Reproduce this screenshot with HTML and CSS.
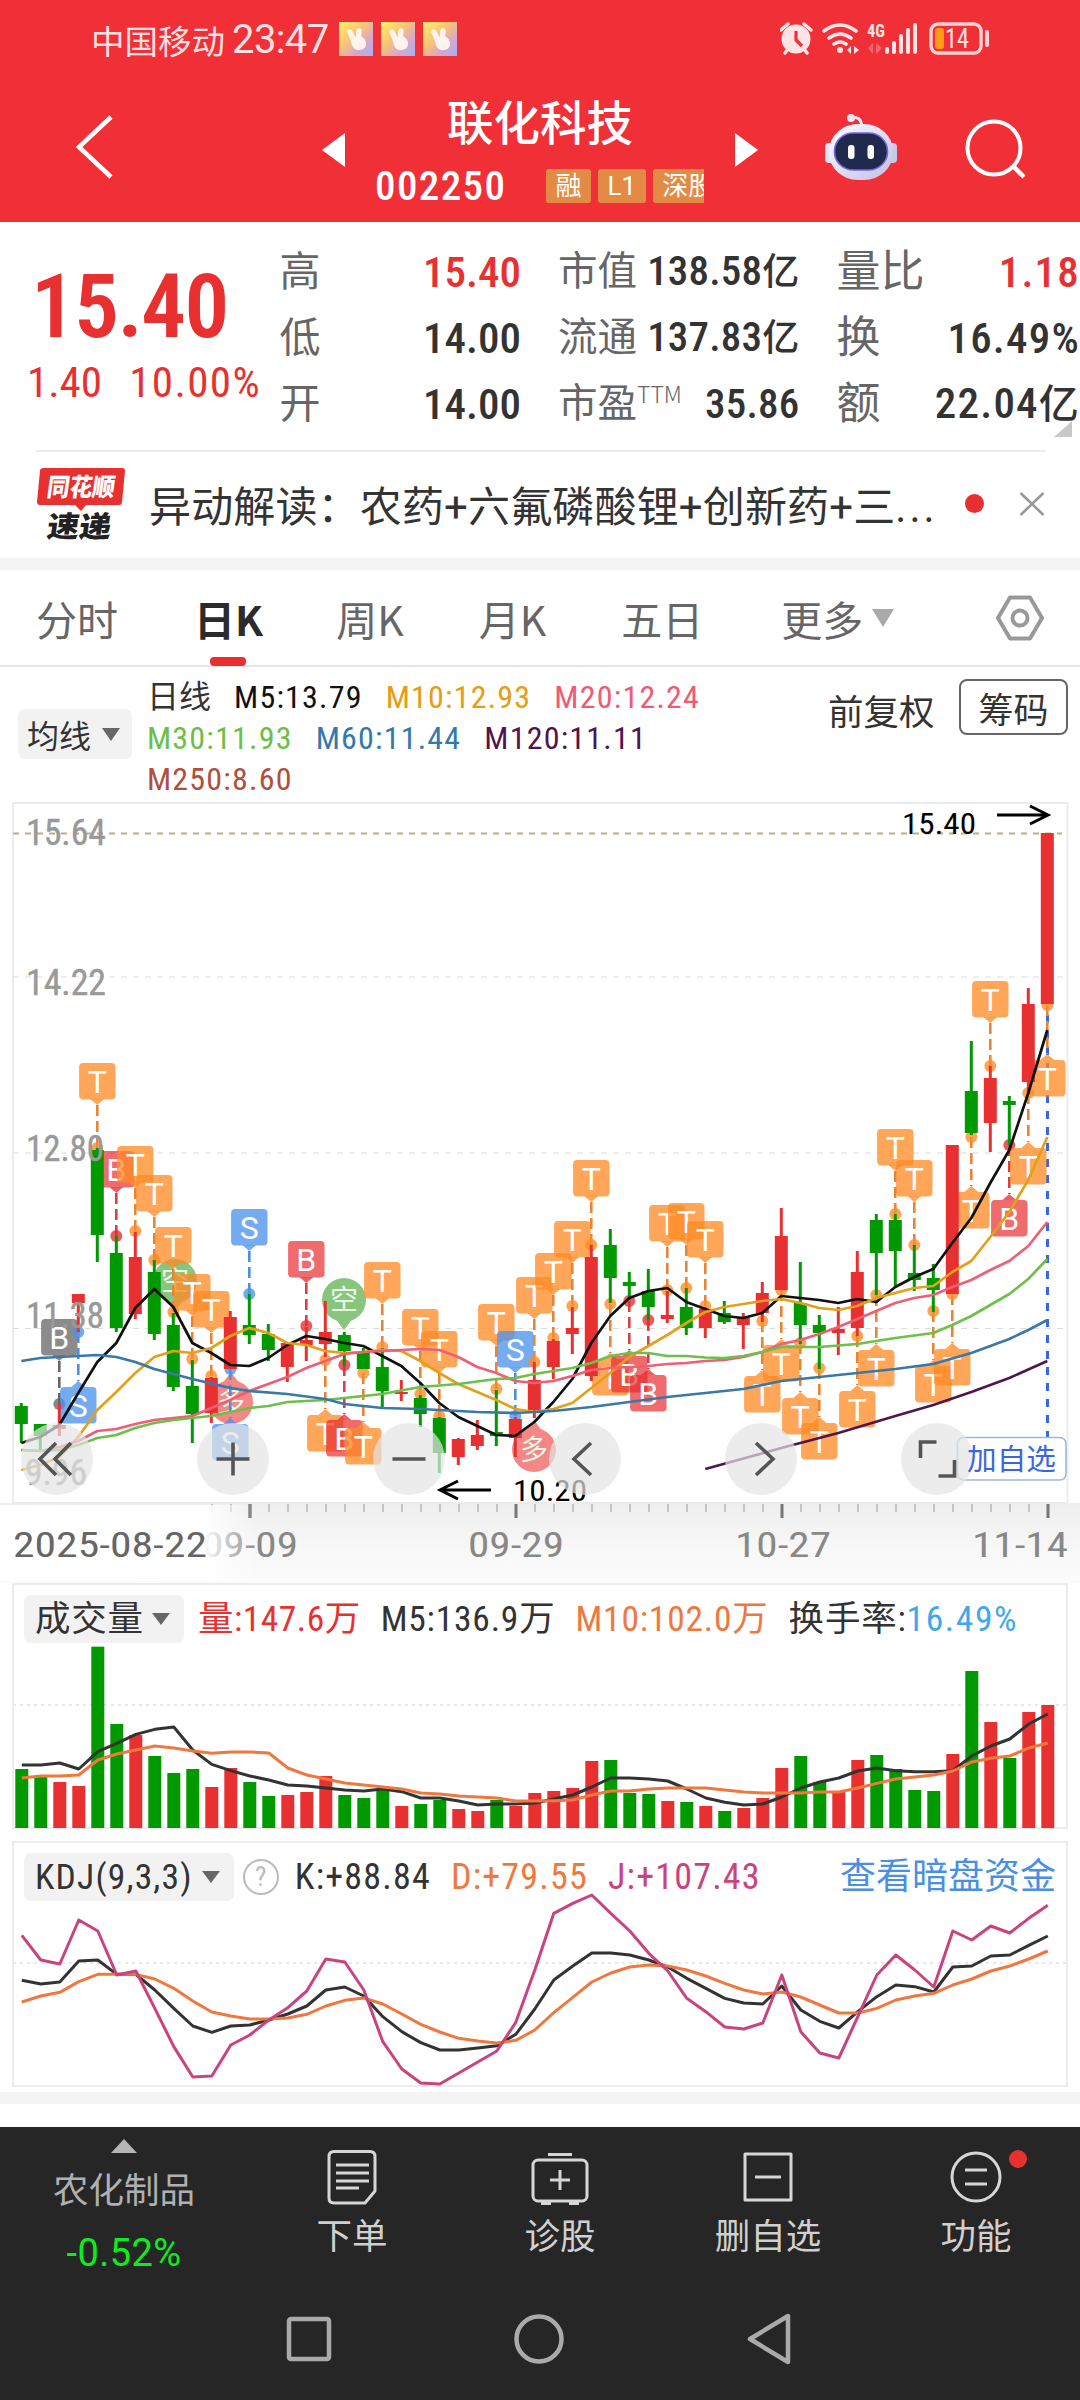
FILE: index.html
```html
<!DOCTYPE html>
<html lang="zh-CN">
<head>
<meta charset="utf-8">
<title>联化科技 002250</title>
<link rel="stylesheet" href="styles.css">
</head>
<body>
<header class="top">
  <div class="status">
    <span class="carrier">中国移动</span><span class="clock">23:47</span>
    <div class="apps">
      <svg class="app" viewBox="0 0 34 34"><defs><linearGradient id="ag" x1="0" y1="0" x2="1" y2="1"><stop offset="0" stop-color="#fff06a"/><stop offset=".4" stop-color="#f9c573"/><stop offset=".7" stop-color="#d8a8c8"/><stop offset="1" stop-color="#9cb4ff"/></linearGradient><symbol id="hand" viewBox="0 0 34 34"><rect width="34" height="34" fill="url(#ag)"/><path d="M11 10l4 9M20 9l-1 9" stroke="#fff3f0" stroke-width="5.5" stroke-linecap="round"/><path d="M11 16l11-2q5 3 5 8t-6 6q-6 1-8-5z" fill="#fff3f0"/></symbol></defs><use href="#hand"/></svg>
      <svg class="app" viewBox="0 0 34 34"><use href="#hand"/></svg>
      <svg class="app" viewBox="0 0 34 34"><use href="#hand"/></svg>
    </div>
    <svg class="sys" width="212" height="36" viewBox="780 22 212 36">
      <g fill="#ffe4e5">
        <circle cx="796" cy="40" r="14.5"/>
        <path d="M781 31l7-6M811 31l-7-6M785 54l3-4M807 54l-3-4" stroke="#ffe4e5" stroke-width="3.5" stroke-linecap="round"/>
        <path d="M796 32v9l6 6" fill="none" stroke="#f12f37" stroke-width="3.2"/>
        <g fill="none" stroke="#ffe4e5" stroke-width="3.6" stroke-linecap="round"><path d="M824 32q16-12 32 0M829 39q11-8 22 0M834 45q6-4 12 0"/></g>
        <circle cx="840" cy="51" r="3"/>
        <path d="M851 47v8l-4-4zM854 47v8l5-4z"/>
        <path d="M873 44v11l-5-6zM876 44v11l6-6z" opacity=".3"/>
        <rect x="885" y="48" width="4" height="7" rx="2"/><rect x="892" y="42" width="4" height="13" rx="2"/><rect x="899" y="35" width="4" height="20" rx="2"/><rect x="906" y="29" width="4" height="26" rx="2"/><rect x="913" y="24" width="4" height="31" rx="2"/>
        <text class="s4g" x="867" y="38" textLength="18" lengthAdjust="spacingAndGlyphs">4G</text>
        <rect x="931" y="25" width="50" height="29" rx="7" fill="none" stroke="#ffd3d5" stroke-width="3.4"/>
        <rect x="985" y="31" width="4" height="17" rx="2" fill="#ffd3d5"/>
        <rect x="935" y="29" width="9" height="21" rx="3" fill="#ff9c17"/>
        <text class="bat" x="945" y="49" textLength="24" lengthAdjust="spacingAndGlyphs">14</text>
      </g>
    </svg>
  </div>
  <div class="bar">
    <svg class="back" width="44" height="70" viewBox="0 0 44 70"><path d="M38 5L6 35l32 30" fill="none" stroke="#fff" stroke-width="4.5"/></svg>
    <svg class="prev" width="23" height="34" viewBox="0 0 23 34"><path d="M23 0v34L0 17z" fill="#fff"/></svg>
    <div class="title">
      <div class="name">联化科技</div>
      <div class="code"><span class="num">002250</span><div class="tags"><span>融</span><span>L1</span><span>深股</span></div></div>
    </div>
    <svg class="next" width="23" height="34" viewBox="0 0 23 34"><path d="M0 0v34L23 17z" fill="#fff"/></svg>
    <svg class="bot" width="72" height="68" viewBox="825 113 72 68">
      <defs><linearGradient id="bg" x1="0" y1="0" x2="1" y2="1"><stop offset="0" stop-color="#fff"/><stop offset="1" stop-color="#bfc0e8"/></linearGradient></defs>
      <path d="M851 118q10-3 11 9" fill="none" stroke="#e4e0f5" stroke-width="3"/><circle cx="851" cy="118" r="4" fill="#e9e6f8"/>
      <rect x="825" y="143" width="9" height="20" rx="4" fill="#e3e2f6"/><rect x="888" y="143" width="9" height="20" rx="4" fill="#c9c8ea"/>
      <rect x="829" y="124" width="64" height="56" rx="29" ry="27" fill="url(#bg)"/>
      <rect x="834.5" y="133" width="53" height="37" rx="19" ry="18" fill="#202a4c" stroke="#7d62e0" stroke-width="1.6"/>
      <rect x="848" y="145" width="6.5" height="14" rx="3" fill="#fff"/><rect x="867.500" y="145" width="6.500" height="14" rx="3" fill="#fff"/>
    </svg>
    <svg class="find" width="62" height="62" viewBox="0 0 62 62"><circle cx="29" cy="29" r="26.500" fill="none" stroke="#fff" stroke-width="4"/><path d="M48 47l11 11" stroke="#fff" stroke-width="4.500"/></svg>
  </div>
</header>

<section class="quote">
  <div class="last"><div class="price">15.40</div><div class="chg"><span>1.40</span><span>10.00%</span></div></div>
  <dl class="col c1"><div><dt>高</dt><dd class="up">15.40</dd></div><div><dt>低</dt><dd>14.00</dd></div><div><dt>开</dt><dd>14.00</dd></div></dl>
  <dl class="col c2"><div><dt>市值</dt><dd>138.58<i>亿</i></dd></div><div><dt>流通</dt><dd>137.83<i>亿</i></dd></div><div><dt>市盈<sup>TTM</sup></dt><dd>35.86</dd></div></dl>
  <dl class="col c3"><div><dt>量比</dt><dd class="up">1.18</dd></div><div><dt>换</dt><dd>16.49%</dd></div><div><dt>额</dt><dd>22.04<i>亿</i></dd></div></dl>
  <svg class="corner" width="18" height="16" viewBox="0 0 18 16"><path d="M18 0v16H0z" fill="#c8c8c8"/></svg>
</section>

<section class="news">
  <svg width="90" height="76" viewBox="36 466 90 76">
    <path d="M44 468h78q3 0 3 3l-3 31q0 3-3 3H86l-5 6-6-6H40q-3 0-3-3l3-31q0-3 4-3z" fill="#e83031"/>
    <text class="lg1" transform="translate(46 496) skewX(-8)" textLength="68" lengthAdjust="spacingAndGlyphs">同花顺</text>
    <text class="lg2" transform="translate(46 537) skewX(-8)" textLength="64" lengthAdjust="spacingAndGlyphs">速递</text>
  </svg>
  <span class="headline">异动解读：农药+六氟磷酸锂+创新药+三<span class="dots">...</span></span>
  <span class="dot"></span>
  <svg class="close" width="26" height="24" viewBox="0 0 26 24"><path d="M1.500 1l23 22M24.500 1l-23 22" stroke="#999" stroke-width="2.600"/></svg>
</section>

<nav class="tabs">
  <span>分时</span><span class="on">日K</span><span>周K</span><span>月K</span><span>五日</span><span class="more">更多<svg width="22" height="18" viewBox="0 0 22 18"><path d="M0 0h22L11 18z" fill="#aaa"/></svg></span>
  <svg class="hex" width="50" height="46" viewBox="0 0 50 46"><path d="M15 2.500h20L47 23 35 43.500H15L3 23z" fill="none" stroke="#999" stroke-width="4" stroke-linejoin="round"/><circle cx="25" cy="23" r="7.500" fill="none" stroke="#999" stroke-width="4"/></svg>
</nav>

<section class="ma">
  <button class="pick">均线<svg width="18" height="13" viewBox="0 0 18 13"><path d="M0 0h18L9 13z" fill="#666"/></svg></button>
  <div class="legend">
    <div><span class="cn">日线</span><span class="m5">M5:13.79</span><span class="m10">M10:12.93</span><span class="m20">M20:12.24</span></div>
    <div><span class="m30">M30:11.93</span><span class="m60">M60:11.44</span><span class="m120">M120:11.11</span></div>
    <div><span class="m250">M250:8.60</span></div>
  </div>
  <span class="adj">前复权</span>
  <button class="chip">筹码</button>
</section>

<svg id="kline" width="1080" height="781" viewBox="0 802 1080 781"></svg>

<section class="panel vol">
  <div class="phead">
    <button class="pick">成交量<svg width="18" height="12" viewBox="0 0 18 12"><path d="M0 0h18L9 12z" fill="#666"/></svg></button>
    <span class="up">量:147.6万</span><span>M5:136.9万</span><span class="or">M10:102.0万</span><span>换手率:<b>16.49%</b></span>
  </div>
  <svg id="volume" width="1080" height="184" viewBox="0 1645 1080 184"></svg>
</section>

<section class="panel kdj">
  <div class="phead">
    <button class="pick">KDJ(9,3,3)<svg width="18" height="12" viewBox="0 0 18 12"><path d="M0 0h18L9 12z" fill="#666"/></svg></button>
    <span class="help">?</span>
    <span>K:+88.84</span><span class="or">D:+79.55</span><span class="pk">J:+107.43</span>
    <a class="link">查看暗盘资金</a>
  </div>
  <svg id="kdj" width="1080" height="200" viewBox="0 1886 1080 200"></svg>
</section>
<div class="band"></div>

<footer class="dock">
  <div class="actions">
    <div class="sector"><svg width="26" height="14" viewBox="0 0 26 14"><path d="M13 0l13 14H0z" fill="#b5b5b5"/></svg><span class="sn">农化制品</span><span class="sp">-0.52%</span></div>
    <div class="act"><svg width="60" height="60" viewBox="0 0 60 60"><path d="M12 4.500h36q5 0 5 5V44L43 56H12q-5 0-5-5V9.500q0-5 5-5zM14 18h33M14 26h33M14 34h33M14 41h23"/></svg><span>下单</span></div>
    <div class="act"><svg width="60" height="60" viewBox="0 0 60 60"><rect x="3" y="13" width="54" height="41" rx="5"/><path d="M18 7.500h24M30 23v20M20 33h20"/><path d="M11 56h10M39 56h10" stroke-width="4"/></svg><span>诊股</span></div>
    <div class="act"><svg width="60" height="60" viewBox="0 0 60 60"><path d="M7 7h46v46H7zM17 30h26"/></svg><span>删自选</span></div>
    <div class="act"><svg width="60" height="60" viewBox="0 0 60 60"><circle cx="30" cy="30" r="24"/><path d="M19 23h22M19 37h22"/></svg><span>功能</span><i class="badge"></i></div>
  </div>
  <div class="keys">
    <svg width="50" height="54" viewBox="0 0 50 54"><rect x="5" y="7" width="40" height="40" rx="2"/></svg>
    <svg width="54" height="54" viewBox="0 0 54 54"><circle cx="27" cy="27" r="22.500"/></svg>
    <svg width="50" height="54" viewBox="0 0 50 54"><path d="M44 4v46L6 27z"/></svg>
  </div>
</footer>
<script src="charts.js"></script>
</body>
</html>
```
FILE: styles.css
```css
*{box-sizing:border-box}
body{margin:0;width:1080px;height:2400px;overflow:hidden;background:#fff;color:#333;font-family:Roboto,"Noto Sans CJK SC",sans-serif;font-stretch:75%}
svg{display:block;flex:none}
button{font:inherit;color:inherit;letter-spacing:inherit;border:0;padding:0;margin:0}
span{white-space:nowrap}
.up{color:#e83031}

.top{height:222px;background:#f12f37;color:#fff}
.status{height:82px;display:flex;align-items:center;padding:0 88px 4px 91px}
.carrier{font-size:33.500px;color:#ffe0e2}
.clock{font-size:40px;font-stretch:100%;letter-spacing:-.6px;margin-left:7px;color:#ffe0e2}
.apps{display:flex;gap:8px;margin-left:10px}
.app{width:34px;height:34px}
.sys{margin-left:auto}
.s4g{font-size:19px;font-weight:700}
.bat{font-size:27px}
.bar{height:140px;display:flex;align-items:flex-start}
.back{margin:30px 0 0 73px}
.prev{margin:51px 0 0 205px}
.title{width:390px;height:140px;display:flex;flex-direction:column;align-items:center}
.name{font-size:46.500px;line-height:60px;margin-top:12px;font-weight:500}
.code{width:328px;height:40px;display:flex;align-items:center;margin-top:12px}
.num{font-size:41px;font-weight:500;letter-spacing:1.400px;width:171px;margin-left:-1px}
.tags{width:158px;display:flex;gap:7px;overflow:hidden}
.tags span{flex:none;background:#e38b45;border-radius:3px;font-size:26px;font-stretch:100%;line-height:34px;padding:0 9.500px}
.next{margin-top:51px}
.bot{margin:31px 0 0 67px}
.find{margin:37px 0 0 68px}

.quote{height:228px;margin:0 0 0 29px;display:flex;position:relative}
.last{width:251px}
.price{font-size:89px;line-height:90px;font-weight:600;letter-spacing:-1.500px;color:#e83031;margin:40px 0 0 2px}
.chg{display:flex;justify-content:space-between;width:234px;font-size:43px;line-height:50px;color:#e83031;margin:5px 0 0 -2px}
.chg span+span{letter-spacing:1.400px}
.col{margin:17px 0 0}
.col div{display:flex;justify-content:space-between;align-items:center;height:66px;white-space:nowrap}
dt{color:#666;font-size:41px;line-height:60px}
dd{margin:0;font-size:43px;font-weight:500;line-height:60px}
dd i{font-style:normal;font-size:37px}
.c1{width:242px}
.c2{width:242px;margin-left:37px}
.c2 dt{font-size:39.500px}
.c2 dd{font-size:41px;letter-spacing:.2px}
.c3{width:244px;margin-left:37px}
.c3 dt{font-size:44px}
.c3 dd{letter-spacing:1.200px}
.c3 dd i{font-size:40px}
sup{font-size:23px;font-family:"Noto Sans CJK SC";font-weight:300;vertical-align:14px;line-height:1}
.corner{position:absolute;right:8px;bottom:13px}

.news{height:108px;margin:0 35px 0 36px;border-top:2px solid #ececec;display:flex;align-items:center;padding-bottom:3px}
.headline{font-size:42px;font-stretch:100%;margin-left:23px;letter-spacing:.15px}
.dots{letter-spacing:3px}
.dot{width:19px;height:19px;border-radius:50%;background:#e83031;margin-left:auto}
.close{margin-left:35px}

.tabs{height:109px;border-top:12px solid #f4f4f4;border-bottom:2px solid #e6e6e6;display:flex;align-items:center;padding:1px 35px 1px 36px;font:41px/58px "Noto Sans CJK SC";color:#666}
.tabs span{margin-right:78px}
.tabs .on{color:#2b2b2b;font-weight:700;position:relative;margin-right:73px;margin-left:-2px}
.on::after{content:"";position:absolute;left:16px;bottom:-19px;width:36px;height:9px;border-radius:4px;background:#e83031}
.tabs span:nth-child(3),.tabs span:nth-child(4){margin-right:75px}
.tabs .more{display:flex;align-items:center;gap:9px;margin:0}
.hex{margin-left:auto}

.ma{height:135px;display:flex;align-items:flex-start;padding-left:18px}
.pick{display:flex;align-items:center;background:#f2f2f2;border-radius:7px;white-space:nowrap}
.ma .pick{width:114px;height:50px;margin-top:42px;font-size:32px;padding-left:9px;gap:11px}
.legend{width:690px;margin:10px 0 0 15px;font-size:32px;letter-spacing:1.200px}
.legend div{display:flex;gap:23px;height:41px;line-height:41px}
.legend .cn{font-size:32px;letter-spacing:0}
.m5{color:#111}.m10{color:#e69d12}.m20{color:#ef5b73}.m30{color:#6bbf47}.m60{color:#3478ad}.m120{color:#50144f}.m250{color:#b14f3d}
.adj{font-size:35.500px;line-height:50px;margin-top:21px;width:131px;margin-left:-9px}
.chip{width:109px;height:56px;margin-top:12px;background:#fff;border:2px solid #666;border-radius:8px;font-size:35px}

.panel{width:1056px;margin-left:12px;border:2px solid #ececec}
.panel>svg{margin-left:-14px}
.vol{height:246px}
.kdj{height:246px;margin-top:12px}
.phead{height:60px;display:flex;align-items:center;gap:20px;padding:8px 10px 0;font-size:35.500px;line-height:48px;letter-spacing:.8px}
.phead .pick{height:48px;padding:0 14px 0 11px;gap:8px;font-size:35.500px}
.phead b{font-weight:400;color:#3fa9e8;letter-spacing:1.600px}
.vol .phead .up{margin-left:-6px;letter-spacing:.5px}
.or{color:#f0783f}
.pk{color:#c9447f}
.kdj .phead{font-size:36px;letter-spacing:1.200px}
.kdj .pick{gap:9px}
.help{width:36px;height:36px;border:2px solid #bbb;border-radius:50%;color:#bbb;font-size:27px;line-height:33px;text-align:center;letter-spacing:0;margin:0 -4px 0 -11px}
.link{margin-left:auto;color:#4a90e2;white-space:nowrap;letter-spacing:0}
.kdj>svg{margin-top:-17px}
.band{height:12px;margin-top:5px;background:#f4f4f4}

.dock{height:273px;margin-top:23px;background:#262626;color:#d0d0d0}
.actions{height:170px;display:flex;font-size:35.500px}
.sector{width:248px;display:flex;flex-direction:column;align-items:center;padding-top:12px}
.sn{line-height:50px;margin-top:13px;color:#b0b0b0}
.sp{font-size:38px;font-stretch:100%;letter-spacing:.4px;line-height:50px;margin-top:12px;color:#0bee1e}
.act{width:208px;display:flex;flex-direction:column;align-items:center;padding-top:20px;position:relative}
.act svg,.keys svg{fill:none;stroke:#d6d6d6;stroke-width:3;stroke-linejoin:round}
.act span{line-height:50px;margin-top:5px}
.badge{position:absolute;left:137px;top:23px;width:18px;height:18px;border-radius:50%;background:#e83031}
.keys{display:flex;justify-content:center;gap:178px;padding:15px 2px 0 0}
.keys svg{stroke:#aaa;stroke-width:4.500}

svg text{font-family:Roboto,"Noto Sans CJK SC",sans-serif}
.lg1{font-size:25px;font-weight:900;fill:#fff}
.lg2{font-size:29px;font-weight:900;fill:#222}
.axis{font-size:36px;fill:#999;stroke:#999;stroke-width:.4}
.date{font-size:35px;fill:#888}
.date.first{fill:#666}
.hl{font-size:30px;fill:#000}
.tag{font-size:32px;font-stretch:100%;fill:#fff;text-anchor:middle}
.ball{font-size:28px;fill:#e8f6e4;text-anchor:middle}
.add{font-size:29px;fill:#3a66e0}
```
FILE: charts.js
```js
const X = i => 21.3 + 19 * i;
const R = '#e83031', G = '#009900';
const rect = (x, y, w, h, f, extra = '') => `<rect x="${x}" y="${y}" width="${w}" height="${h}" fill="${f}" ${extra}/>`;
const line = (x1, y1, x2, y2, c, w, extra = '') => `<line x1="${x1}" y1="${y1}" x2="${x2}" y2="${y2}" stroke="${c}" stroke-width="${w}" ${extra}/>`;
const curve = (pts, c, w = 3) => `<polyline points="${pts.map(p => p.join(',')).join(' ')}" fill="none" stroke="${c}" stroke-width="${w}" stroke-linejoin="round"/>`;
const text = (x, y, s, cls, len) => `<text x="${x}" y="${y}" class="${cls}" ${len ? `textLength="${len}" lengthAdjust="spacingAndGlyphs"` : ''}>${s}</text>`;

// colour, high, body top, body bottom, low
const candles = `G1403,1406,1424,1443 G1424,1424,1436,1450 R1403,1425,1429,1436 R1294,1294,1303,1332 G1148,1150,1235,1262 G1236,1253,1328,1332
R1232,1257,1314,1319 G1260,1272,1334,1340 G1313,1325,1387,1391 G1360,1386,1414,1443 R1377,1378,1413,1423 R1311,1317,1369,1369
G1294,1325,1335,1344 G1324,1334,1350,1361 R1342,1343,1367,1382 R1327,1340,1345,1361 R1301,1332,1344,1357 G1332,1335,1351,1366
G1348,1353,1369,1369 G1348,1367,1391,1407 R1380,1392,1394,1401 G1395,1398,1414,1427 G1417,1418,1453,1473 R1438,1439,1457,1465
R1420,1435,1446,1450 G1390,1432,1436,1446 R1417,1419,1438,1457 R1362,1380,1410,1418 R1339,1341,1367,1379 R1307,1328,1334,1354
R1245,1257,1376,1381 G1229,1245,1278,1303 G1272,1282,1286,1300 G1269,1291,1307,1320 R1291,1315,1319,1323 G1288,1307,1328,1335
R1307,1309,1328,1338 G1301,1313,1322,1324 R1313,1318,1325,1349 R1282,1293,1313,1322 R1208,1236,1290,1290 G1262,1303,1325,1344
G1315,1325,1333,1369 R1307,1329,1333,1355 R1251,1272,1328,1336 G1214,1220,1253,1295 G1214,1220,1251,1287 G1245,1273,1280,1291
G1264,1278,1290,1312 R1145,1145,1294,1294 G1041,1091,1133,1135 R1066,1078,1123,1152 G1096,1101,1105,1145 R988,1004,1082,1094
R833,833,1004,1004`.split(/\s+/).map(s => ({ c: s[0] === 'R' ? R : G, v: s.slice(1).split(',').map(Number) }));

const m5 = [1443,1437,1425,1393,1362,1343,1308,1289,1307,1343,1353,1365,1366,1358,1345,1336,1339,1343,1346,1356,1366,1383,1403,1417,1426,1435,1436,1422,1402,1379,1343,1316,1298,1291,1288,1302,1309,1316,1318,1313,1296,1298,1300,1303,1299,1302,1287,1277,1269,1243,1218,1183,1150,1093,1030];
const m10 = [1470,1465,1457,1437,1410,1392,1373,1357,1351,1353,1348,1336,1328,1333,1343,1345,1351,1353,1352,1350,1351,1361,1373,1384,1392,1400,1409,1412,1409,1403,1388,1373,1357,1346,1335,1323,1312,1307,1304,1301,1299,1303,1308,1310,1306,1298,1293,1288,1286,1272,1261,1237,1212,1180,1137];
const m20 = [1450,1451,1447,1441,1431,1429,1424,1420,1418,1416,1408,1400,1391,1384,1377,1368,1361,1354,1352,1351,1350,1349,1350,1357,1367,1373,1381,1383,1381,1376,1370,1368,1367,1366,1364,1363,1361,1360,1357,1352,1344,1340,1334,1327,1319,1311,1303,1298,1295,1287,1280,1270,1261,1246,1222];
const at = a => a.map((y, i) => [X(i), y]);
const pairs = a => a.map(([i, y]) => [X(i), y]);
const m30 = [[0,1450],[1,1451],[2,1450],[3,1445],[4,1438],[5,1435],[6,1428],[7,1423],[8,1420],[9,1418],[10,1416],[11,1412],[12,1408],[13,1406],[14,1402],[16,1400],[17,1398],[19,1394],[21,1387],[23,1384],[25,1379],[26,1378],[27,1374],[29,1368],[30,1363],[31,1356],[32,1353],[33,1353],[34,1356],[35,1356],[36,1357.500],[37,1358],[38,1356],[39,1352],[40,1347],[42,1347],[44,1344],[46,1338],[48,1333],[49,1325],[50,1316],[51,1305],[52,1294],[53,1279],[54,1259]];
const m60 = [[0,1361],[1,1358],[2,1357],[4,1355],[5,1357],[6,1362],[7,1369],[9,1379],[11,1388],[12,1391],[14,1394],[16,1399],[17,1404],[19,1408],[21,1409],[24,1412],[26,1413],[28,1411],[30,1407],[32,1402],[34,1397],[36,1393],[38,1389],[40,1381],[42,1377],[44,1373],[46,1369],[48,1364],[50,1353],[52,1339],[53,1330],[54,1320]];
const m120 = [[36,1469],[40,1448],[43,1433],[46,1416],[48,1405],[50,1392],[52,1378],[54,1361]];

// index, letter, anchor y, side (u = flag above the bar, d = below)
const flags = [[2,'X',1404,'u'],[3,'S',1332,'d'],[4,'T',1148,'u'],[5,'B',1236,'u'],[6,'T',1231,'u'],[7,'T',1260,'u'],[8,'T',1312,'u'],[9,'T',1359,'u'],[10,'T',1376,'u'],[11,'S',1369,'d'],[12,'S',1294,'u'],[15,'B',1326,'u'],[16,'T',1360,'d'],[17,'B',1365,'d'],[18,'T',1373,'d'],[19,'T',1347,'u'],[21,'T',1394,'u'],[22,'T',1416,'u'],[25,'T',1389,'u'],[26,'S',1416,'u'],[27,'T',1362,'u'],[28,'T',1338,'u'],[29,'T',1306,'u'],[30,'T',1245,'u'],[31,'T',1304,'d'],[32,'B',1301,'d'],[33,'B',1320,'d'],[34,'T',1290,'u'],[35,'T',1288,'u'],[36,'T',1306,'u'],[39,'T',1321,'d'],[40,'T',1290,'d'],[41,'T',1343,'d'],[42,'T',1368,'d'],[44,'T',1336,'d'],[45,'T',1295,'d'],[46,'T',1214,'u'],[47,'T',1245,'u'],[48,'T',1311,'d'],[49,'T',1294,'d'],[50,'T',1137,'d'],[51,'T',1066,'u'],[52,'B',1145,'d'],[53,'T',1093,'d'],[54,'T',1005,'d']];
const tone = { T: ['#ff8a25', '#e98532'], B: ['#e82c2f', '#dc3f3f'], S: ['#4a92ec', '#4a90e2'], X: ['#666', '#666'] };
const flag = ([i, k, y, side]) => {
  const x = X(i), up = side === 'u', top = up ? y - 85 : y + 55, [f, s] = tone[k];
  const tip = up ? `M${x - 7} ${top + 36}h14l-7 6z` : `M${x - 7} ${top}h14l-7-6z`;
  return line(x, up ? top + 42 : y, x, up ? y : top - 6, s, 2.6, 'stroke-dasharray="11 5"')
    + `<circle cx="${x}" cy="${y}" r="6" fill="${f}" fill-opacity=".78"/>`
    + rect(x - 18.2, top, 36.4, 36.4, f, `rx="4" fill-opacity="${k === 'B' ? .7 : .76}"`)
    + `<path d="${tip}" fill="${f}" fill-opacity=".76"/>`
    + text(x, top + 30, k === 'X' ? 'B' : k, 'tag');
};
const ball = (x, y, s, c, dir) => `<g opacity=".9"><circle cx="${x}" cy="${y}" r="22" fill="${c}"/><path d="M${x - 9} ${y + dir * 18}h18l-9 ${dir * 12}z" fill="${c}"/>${text(x, y + 10, s, 'ball')}</g>`;

let k = rect(0, 1503, 1080, 80, 'url(#axis)') + `<defs>
<linearGradient id="axis" x1="0" y1="0" x2="0" y2="1"><stop offset="0" stop-color="#eeeeee"/><stop offset=".6" stop-color="#f8f8f8"/><stop offset="1" stop-color="#fbfbfb"/></linearGradient>
<linearGradient id="fade"><stop offset="0" stop-color="#fff"/><stop offset=".8" stop-color="#fff" stop-opacity=".93"/><stop offset="1" stop-color="#fff" stop-opacity="0"/></linearGradient></defs>`;
k += rect(13, 803, 1054.500, 700, 'none', 'stroke="#ececec" stroke-width="2"');
k += line(13, 977, 1067, 977, '#ddd', 1.2, 'stroke-dasharray="6 6"') + line(13, 1153, 1067, 1153, '#ececec', 2, 'stroke-dasharray="6 6"')
  + line(13, 1328.500, 1067, 1328.500, '#ddd', 1.2, 'stroke-dasharray="6 6"') + line(13, 833.500, 1062, 833.500, '#bfad80', 2, 'stroke-dasharray="6 6"');
k += line(1047.500, 1015, 1047.500, 1437, '#3a66e0', 3, 'stroke-dasharray="8 8"');
k += ball(175, 1281, '空', '#7cc070', 1) + ball(344, 1300, '空', '#7cc070', 1) + ball(231, 1402, '多', '#f47b7b', -1) + ball(534, 1450, '多', '#f47b7b', -1);
k += flags.map(flag).join('');
k += candles.map(({ c, v: [h, t, b, l] }, i) => line(X(i), h, X(i), l, c, 3) + rect(X(i) - 6.5, t, 13, b - t, c)).join('');
k += curve(at(m5), '#111', 2.7) + curve(at(m10), '#e3a01b', 2.7) + curve(at(m20), '#ee5f76', 2.7) + curve(pairs(m30), '#6fbf4b', 2.7) + curve(pairs(m60), '#3a78a8', 2.7) + curve(pairs(m120), '#511551', 2.7);
[['15.64', 845, 80], ['14.22', 995, 80], ['12.80', 1161, 78], ['11.38', 1328, 78], ['9.96', 1485, 62]].forEach(([s, y, w]) => k += text(s === '9.96' ? 25 : 26, y, s, 'axis', w));
k += text(902, 834, '15.40', 'hl', 74) + text(513, 1501, '10.20', 'hl', 74);
k += `<g fill="none" stroke="#000" stroke-width="3"><path d="M997 815h50M1030 806l18 9-18 9M491 1490h-50M458 1481l-18 9 18 9"/></g>`;
for (let i = 10; i < 55; i++) {
  const big = [12, 26, 40, 54].includes(i);
  k += line(X(i) + .7, 1504, X(i) + .7, big ? 1518 : 1512, big ? '#777' : '#c4c4c4', big ? 3 : 2);
}
k += text(202, 1557, '09-09', 'date', 96) + text(468, 1557, '09-29', 'date', 96) + text(735, 1557, '10-27', 'date', 96) + text(972, 1557, '11-14', 'date', 96);
k += rect(0, 1505, 258, 76, 'url(#fade)') + text(13, 1557, '2025-08-22', 'date first', 194);
k += line(250, 1504, 250, 1518, '#888', 3);
k += rect(957.500, 1437.500, 108.500, 42.500, '#fff', 'rx="6" stroke="#9db6dc" stroke-width="1.600"');
const icons = ['M56 -16l-16 16 16 16M71 -16l-16 16 16 16', 'M216.500 0h33M233 -16.500v33', 'M392.500 0h33', 'M591 -16l-17 16 17 16', 'M756 -16l17 16-17 16', 'M920.500 -1v-16h16M954.500 1v16h-16'];
icons.forEach((d, n) => {
  k += `<circle cx="${57 + 176 * n}" cy="1459" r="36" fill="#e4e4e4" fill-opacity=".7"/><path d="${d}" transform="translate(0 1459)" fill="none" stroke="#555" stroke-width="3.600"/>`;
});
k += text(967, 1470, '加自选', 'add', 89);
document.getElementById('kline').innerHTML = k;

const volTop = [807,831,846,858,440,672,705,768,819,807,861,804,846,888,885,876,828,885,894,867,918,912,900,927,933,900,918,879,873,864,783,780,879,882,903,906,918,933,924,894,804,768,846,873,780,765,807,870,873,762,513,666,774,636,615];
const v5 = [795,795,789,807,755,730,703,688,681,750,793,812,828,840,855,858,864,870,873,867,875,894,894,903,915,912,912,909,897,885,861,834,834,837,843,867,894,907,915,912,891,864,846,834,813,804,812,815,815,812,768,738,717,672,642];
const v10 = [834,828,828,825,780,762,750,738,744,753,760,756,756,759,804,825,837,849,855,861,867,879,882,888,891,894,903,903,902,900,885,873,873,867,864,864,864,870,876,879,879,879,876,876,864,850,837,831,825,813,786,775,768,744,729];
const scaled = (a, base) => a.map((y, i) => [X(i) + .5, base + y / 3]);
document.getElementById('volume').innerHTML = line(13, 1705, 1067, 1705, '#e8e8e8', 2, 'stroke-dasharray="3 4"')
  + volTop.map((y, i) => rect(X(i) - 6, 1500 + y / 3, 13, 328 - y / 3, candles[i].c)).join('')
  + curve(scaled(v5, 1500), '#333') + curve(scaled(v10, 1500), '#f0783f');

const kj = [316,390,402,270,303,435,423,535,650,741,738,645,615,570,533,483,387,396,480,635,717,759,762,729,696,663,577,420,250,220,195,250,303,370,423,505,545,591,597,579,435,605,669,684,560,435,375,420,471,303,330,288,309,265,226];
const kk = [451,462,456,393,390,433,433,480,535,588,607,588,585,570,552,528,480,471,498,560,605,638,660,660,654,647,613,537,450,408,369,369,375,390,411,445,475,505,519,522,468,540,574,594,545,500,465,470,486,411,408,378,375,346,318];
const kd = [516,498,487,455,433,433,433,447,475,513,546,558,567,567,564,553,528,511,504,522,552,583,606,625,633,639,631,600,548,502,456,429,411,405,408,420,438,460,480,492,486,501,525,549,549,535,510,498,490,465,447,423,408,387,363];
document.getElementById('kdj').innerHTML = line(13, 1963, 1067, 1963, '#e8e8e8', 2, 'stroke-dasharray="3 4"')
  + curve(scaled(kk, 1830), '#333') + curve(scaled(kd, 1830), '#f0783f') + curve(scaled(kj, 1830), '#c9447f');
```
